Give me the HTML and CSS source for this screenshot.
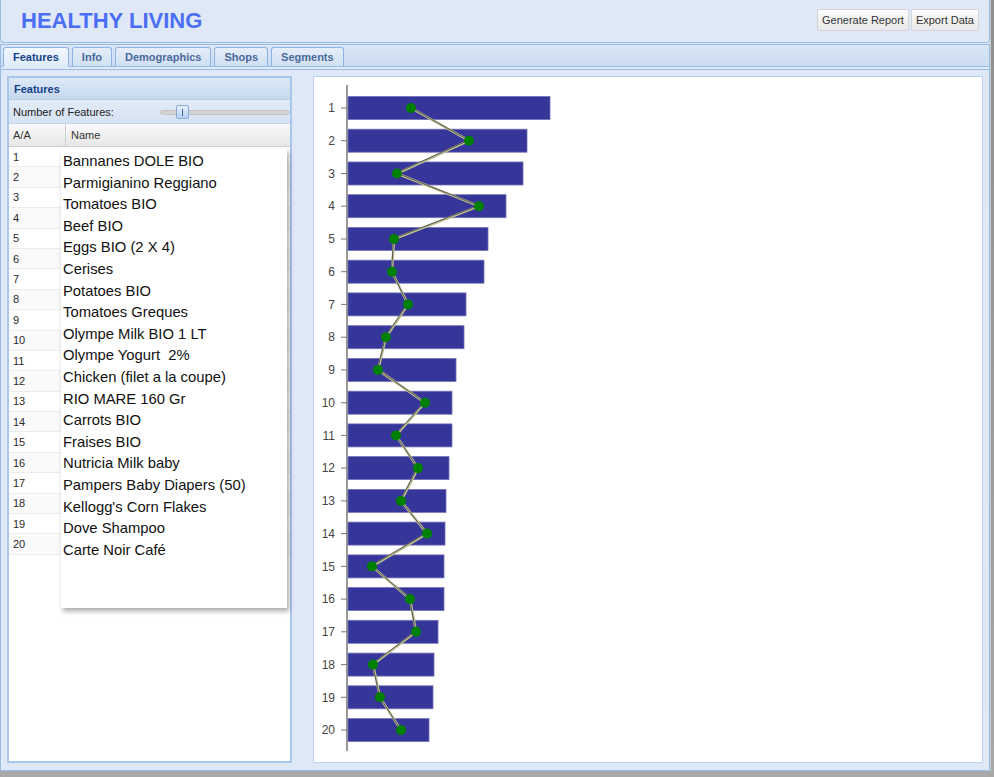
FILE: index.html
```html
<!DOCTYPE html>
<html>
<head>
<meta charset="utf-8">
<link rel="stylesheet" href="styles.css">
</head>
<body>
<div class="app">
  <header class="header">
    <h1 class="title">HEALTHY LIVING</h1>
    <div class="actions">
      <button class="btn">Generate Report</button>
      <button class="btn">Export Data</button>
    </div>
  </header>
  <div class="tabpanel">
    <div class="tabstrip">
      <div class="tab active">Features</div>
      <div class="tab">Info</div>
      <div class="tab">Demographics</div>
      <div class="tab">Shops</div>
      <div class="tab">Segments</div>
    </div>
    <div class="stripline"></div>
    <div class="tabbody">
      <section class="panel left">
        <div class="panel-head">Features</div>
        <div class="toolbar">
          <span class="tb-label">Number of Features:</span>
          <div class="slider"><div class="track"></div><div class="thumb"></div></div>
        </div>
        <div class="grid">
          <div class="grid-head"><div class="c1">A/A</div><div class="c2">Name</div></div>
          <div class="row"><div class="c1">1</div></div>
          <div class="row"><div class="c1">2</div></div>
          <div class="row"><div class="c1">3</div></div>
          <div class="row"><div class="c1">4</div></div>
          <div class="row"><div class="c1">5</div></div>
          <div class="row"><div class="c1">6</div></div>
          <div class="row"><div class="c1">7</div></div>
          <div class="row"><div class="c1">8</div></div>
          <div class="row"><div class="c1">9</div></div>
          <div class="row"><div class="c1">10</div></div>
          <div class="row"><div class="c1">11</div></div>
          <div class="row"><div class="c1">12</div></div>
          <div class="row"><div class="c1">13</div></div>
          <div class="row"><div class="c1">14</div></div>
          <div class="row"><div class="c1">15</div></div>
          <div class="row"><div class="c1">16</div></div>
          <div class="row"><div class="c1">17</div></div>
          <div class="row"><div class="c1">18</div></div>
          <div class="row"><div class="c1">19</div></div>
          <div class="row"><div class="c1">20</div></div>
        </div>
        <ul class="dropdown">
          <li>Bannanes DOLE BIO</li>
          <li>Parmigianino Reggiano</li>
          <li>Tomatoes BIO</li>
          <li>Beef BIO</li>
          <li>Eggs BIO (2 X 4)</li>
          <li>Cerises</li>
          <li>Potatoes BIO</li>
          <li>Tomatoes Greques</li>
          <li>Olympe Milk BIO 1 LT</li>
          <li>Olympe Yogurt&nbsp; 2%</li>
          <li>Chicken (filet a la coupe)</li>
          <li>RIO MARE 160 Gr</li>
          <li>Carrots BIO</li>
          <li>Fraises BIO</li>
          <li>Nutricia Milk baby</li>
          <li>Pampers Baby Diapers (50)</li>
          <li>Kellogg's Corn Flakes</li>
          <li>Dove Shampoo</li>
          <li>Carte Noir Café</li>
        </ul>
      </section>
      <section class="panel chart">
        <svg class="chart-svg" width="668" height="685" viewBox="1 1 668 685">
          <line x1="34" y1="9" x2="34" y2="675" stroke="#777" stroke-width="1.5"/>
          <g fill="#35359a" stroke="#7272b8" stroke-width="0.8">
            <rect x="35" y="20.5" width="202" height="23"/>
            <rect x="35" y="53.2" width="179" height="23"/>
            <rect x="35" y="86" width="175" height="23"/>
            <rect x="35" y="118.7" width="158" height="23"/>
            <rect x="35" y="151.5" width="140" height="23"/>
            <rect x="35" y="184.2" width="136" height="23"/>
            <rect x="35" y="216.9" width="118" height="23"/>
            <rect x="35" y="249.7" width="116" height="23"/>
            <rect x="35" y="282.4" width="108" height="23"/>
            <rect x="35" y="315.2" width="104" height="23"/>
            <rect x="35" y="347.9" width="104" height="23"/>
            <rect x="35" y="380.6" width="101" height="23"/>
            <rect x="35" y="413.4" width="98" height="23"/>
            <rect x="35" y="446.1" width="97" height="23"/>
            <rect x="35" y="478.9" width="96" height="23"/>
            <rect x="35" y="511.6" width="96" height="23"/>
            <rect x="35" y="544.3" width="90" height="23"/>
            <rect x="35" y="577.1" width="86" height="23"/>
            <rect x="35" y="609.8" width="85" height="23"/>
            <rect x="35" y="642.6" width="81" height="23"/>
          </g>
          <g stroke="#777" stroke-width="1">
            <line x1="28" y1="32" x2="34" y2="32"/>
            <line x1="28" y1="64.7" x2="34" y2="64.7"/>
            <line x1="28" y1="97.5" x2="34" y2="97.5"/>
            <line x1="28" y1="130.2" x2="34" y2="130.2"/>
            <line x1="28" y1="163" x2="34" y2="163"/>
            <line x1="28" y1="195.7" x2="34" y2="195.7"/>
            <line x1="28" y1="228.4" x2="34" y2="228.4"/>
            <line x1="28" y1="261.2" x2="34" y2="261.2"/>
            <line x1="28" y1="293.9" x2="34" y2="293.9"/>
            <line x1="28" y1="326.7" x2="34" y2="326.7"/>
            <line x1="28" y1="359.4" x2="34" y2="359.4"/>
            <line x1="28" y1="392.1" x2="34" y2="392.1"/>
            <line x1="28" y1="424.9" x2="34" y2="424.9"/>
            <line x1="28" y1="457.6" x2="34" y2="457.6"/>
            <line x1="28" y1="490.4" x2="34" y2="490.4"/>
            <line x1="28" y1="523.1" x2="34" y2="523.1"/>
            <line x1="28" y1="555.8" x2="34" y2="555.8"/>
            <line x1="28" y1="588.6" x2="34" y2="588.6"/>
            <line x1="28" y1="621.3" x2="34" y2="621.3"/>
            <line x1="28" y1="654.1" x2="34" y2="654.1"/>
          </g>
          <g text-anchor="end" font-family="Liberation Sans, Arial, sans-serif" font-size="12" fill="#444">
            <text x="22" y="36">1</text>
            <text x="22" y="68.9">2</text>
            <text x="22" y="101.7">3</text>
            <text x="22" y="134.4">4</text>
            <text x="22" y="167.2">5</text>
            <text x="22" y="199.9">6</text>
            <text x="22" y="232.6">7</text>
            <text x="22" y="265.4">8</text>
            <text x="22" y="298.1">9</text>
            <text x="22" y="330.9">10</text>
            <text x="22" y="363.6">11</text>
            <text x="22" y="396.3">12</text>
            <text x="22" y="429.1">13</text>
            <text x="22" y="461.8">14</text>
            <text x="22" y="494.6">15</text>
            <text x="22" y="527.3">16</text>
            <text x="22" y="560">17</text>
            <text x="22" y="592.8">18</text>
            <text x="22" y="625.5">19</text>
            <text x="22" y="658.3">20</text>
          </g>
          <polyline fill="none" stroke="#b9bc8c" stroke-width="2.5" stroke-linejoin="round"
            points="98,32 156,64.7 84,97.5 166,130.2 81,163 79,195.7 95,228.4 73,261.2 65,293.9 112,326.7 83,359.4 105,392.1 88,424.9 114,457.6 59,490.4 97,523.1 103,555.8 60,588.6 67,621.3 88,654.1"/>
          <polyline fill="none" stroke="#5a5a5a" stroke-width="1" stroke-linejoin="round" transform="translate(-0.5,-0.6)"
            points="98,32 156,64.7 84,97.5 166,130.2 81,163 79,195.7 95,228.4 73,261.2 65,293.9 112,326.7 83,359.4 105,392.1 88,424.9 114,457.6 59,490.4 97,523.1 103,555.8 60,588.6 67,621.3 88,654.1"/>
          <g fill="#008000">
            <circle cx="98" cy="32" r="5"/>
            <circle cx="156" cy="64.7" r="5"/>
            <circle cx="84" cy="97.5" r="5"/>
            <circle cx="166" cy="130.2" r="5"/>
            <circle cx="81" cy="163" r="5"/>
            <circle cx="79" cy="195.7" r="5"/>
            <circle cx="95" cy="228.4" r="5"/>
            <circle cx="73" cy="261.2" r="5"/>
            <circle cx="65" cy="293.9" r="5"/>
            <circle cx="112" cy="326.7" r="5"/>
            <circle cx="83" cy="359.4" r="5"/>
            <circle cx="105" cy="392.1" r="5"/>
            <circle cx="88" cy="424.9" r="5"/>
            <circle cx="114" cy="457.6" r="5"/>
            <circle cx="59" cy="490.4" r="5"/>
            <circle cx="97" cy="523.1" r="5"/>
            <circle cx="103" cy="555.8" r="5"/>
            <circle cx="60" cy="588.6" r="5"/>
            <circle cx="67" cy="621.3" r="5"/>
            <circle cx="88" cy="654.1" r="5"/>
          </g>
        </svg>
      </section>
    </div>
  </div>
</div>
</body>
</html>
```

FILE: styles.css
```css
* { box-sizing: border-box; }
html, body { margin: 0; padding: 0; }
body {
  width: 994px;
  height: 777px;
  overflow: hidden;
  background: linear-gradient(to bottom, #8f8f8f 0, #a8a8a8 100%);
  font-family: "Liberation Sans", Arial, sans-serif;
  font-size: 11px;
  color: #222;
}
.app {
  width: 991px;
  height: 771px;
  background: #dfe8f6;
  display: flex;
  flex-direction: column;
  border-right: 1px solid #c9c9c9;
}
.header {
  height: 43px;
  border: 1px solid #99bbe8;
  border-top: none;
  border-radius: 0 0 4px 4px;
  background: #dfe8f6;
  display: flex;
  align-items: center;
  justify-content: space-between;
  padding: 0 10px 0 20px;
  flex: none;
}
.title {
  margin: 0;
  font-size: 22px;
  font-weight: bold;
  color: #4b6ef5;
}
.actions { display: flex; gap: 2px; align-self: flex-start; margin-top: 9px; }
.btn {
  height: 22px;
  padding: 0 4px;
  border: 1px solid #d4d4d4;
  border-radius: 2px;
  background: linear-gradient(to bottom, #fdfdfd, #e7e7e7);
  font-family: "Liberation Sans", Arial, sans-serif;
  font-size: 11px;
  color: #333;
}
.tabpanel {
  flex: 1;
  margin-top: 1px;
  border: 1px solid #99bbe8;
  display: flex;
  flex-direction: column;
}
.tabstrip {
  height: 22px;
  flex: none;
  background: linear-gradient(to bottom, #dbe6f5, #cbdcf2);
  border-bottom: 1px solid #99bbe8;
  display: flex;
  align-items: flex-end;
  gap: 3px;
  padding-left: 2px;
}
.tab {
  height: 19px;
  padding: 0 9px;
  display: flex;
  align-items: center;
  font-weight: bold;
  font-size: 11px;
  color: #4a6a9c;
  border: 1px solid #8db2e3;
  border-bottom: none;
  border-radius: 3px 3px 0 0;
  background: linear-gradient(to bottom, #e6eef9, #cfdff3);
}
.tab.active {
  height: 20px;
  color: #15428b;
  background: linear-gradient(to bottom, #f2f7fd, #deebfb);
  margin-bottom: -1px;
  border-bottom: 1px solid #deebfb;
}
.stripline {
  height: 2px;
  flex: none;
  background: #deebfb;
  border-bottom: 1px solid #99bbe8;
  box-sizing: content-box;
}
.tabbody {
  flex: 1;
  display: flex;
  gap: 21px;
  padding: 6px 7px 7px 6px;
}
.panel {
  position: relative;
  background: #fff;
}
.left {
  width: 285px;
  flex: none;
  border: 2px solid #a9c6ec;
  display: flex;
  flex-direction: column;
}
.panel-head {
  height: 22px;
  flex: none;
  padding-left: 5px;
  display: flex;
  align-items: center;
  font-weight: bold;
  color: #15428b;
  background: linear-gradient(to bottom, #dce8f6, #c7d9ef);
  border-bottom: 1px solid #b4cbea;
}
.toolbar {
  height: 24px;
  flex: none;
  display: flex;
  align-items: center;
  padding-left: 4px;
  background: linear-gradient(to bottom, #e2ebf7, #d6e3f3);
  border-bottom: 1px solid #c2d5ee;
  color: #222;
}
.tb-label { width: 147px; }
.slider { position: relative; flex: 1; height: 16px; }
.track {
  position: absolute;
  left: 0; right: 0; top: 6px;
  height: 5px;
  border-radius: 3px;
  background: #d2d2d2;
  border: 1px solid #c4c4c4;
}
.thumb {
  position: absolute;
  left: 16px; top: 1px;
  width: 13px; height: 14px;
  border: 1px solid #8aaad6;
  border-radius: 2px;
  background: linear-gradient(to bottom, #e4efff, #b9d0f1);
}
.thumb::after {
  content: "";
  position: absolute;
  left: 5px; top: 3px;
  width: 1px; height: 7px;
  background: #43689e;
}
.grid { flex: none; }
.grid-head {
  height: 23px;
  display: flex;
  background: linear-gradient(to bottom, #fafafa, #e6e6e6);
  border-bottom: 1px solid #d0d0d0;
  color: #333;
}
.grid-head .c1 {
  width: 57px;
  border-right: 1px solid #d0d0d0;
  display: flex; align-items: center; padding-left: 4px;
}
.grid-head .c2 { display: flex; align-items: center; padding-left: 5px; }
.row {
  height: 20.4px;
  border-bottom: 1px solid #ececec;
  display: flex;
  align-items: center;
  color: #2a2a2a;
}
.row:nth-child(odd) { background: #fafafa; }
.row .c1 { padding-left: 4px; }
.dropdown {
  position: absolute;
  left: 52px;
  top: 71px;
  width: 226px;
  height: 459px;
  margin: 0;
  padding: 2px 0 0 2px;
  list-style: none;
  background: #fff;
  box-shadow: 2px 3px 5px rgba(0, 0, 0, 0.35);
  font-family: "Liberation Sans", Arial, sans-serif;
  font-size: 14.8px;
  color: #111;
}
.dropdown li { height: 21.6px; line-height: 21.6px; white-space: nowrap; }
.chart {
  flex: 1;
  border: 1px solid #b8d0ee;
}
.chart-svg { display: block; }
```
